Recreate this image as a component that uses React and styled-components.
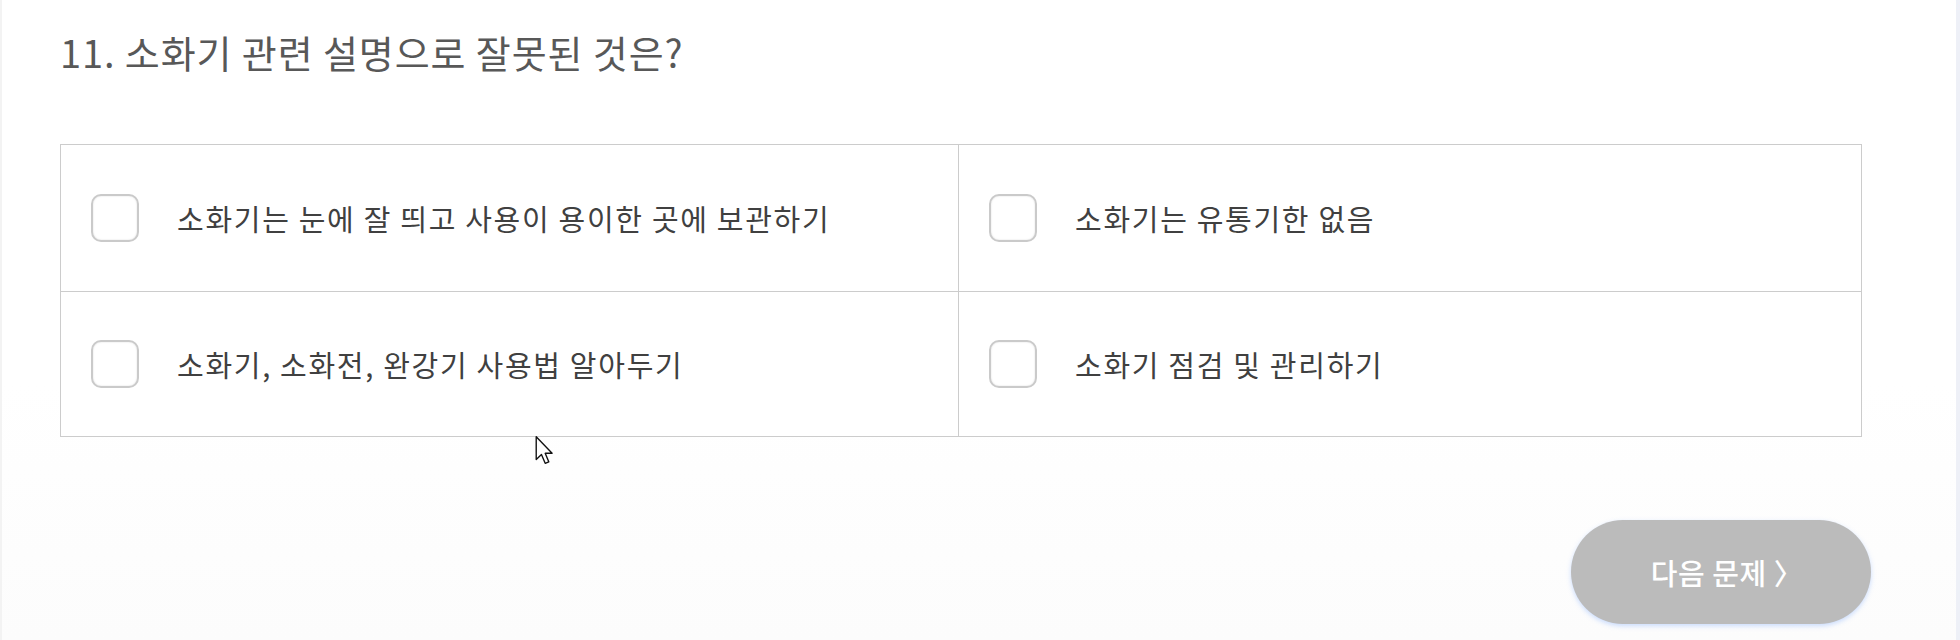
import React from 'react';
import styled, { createGlobalStyle } from 'styled-components';

const GlobalStyle = createGlobalStyle`
    html, body {
        margin: 0;
        padding: 0;
        background: #ffffff;
    }
    body {
        font-family: "Noto Sans CJK KR", "Noto Sans", sans-serif;
    }
`;

const Page = styled.div`
    position: relative;
    box-sizing: border-box;
    width: 1960px;
    height: 640px;
    padding: 27px 94px 0 60px;
    border-left: 2px solid #f3f3f3;
    border-right: 4px solid #eef0f7;
    background: linear-gradient(#ffffff 60%, #fcfcfc);
    overflow: hidden;
`;

const Title = styled.h2`
    margin: 0 0 0 -2px;
    font-size: 38px;
    font-weight: 400;
    line-height: 50px;
    color: #585858;
    letter-spacing: 0.9px;
`;

const Choices = styled.div`
    display: grid;
    grid-template-columns: 897px 1fr;
    grid-template-rows: 146px 144px;
    gap: 1px;
    margin-top: 67px;
    margin-left: -2px;
    border: 1px solid #cccccc;
    background: #cccccc;
`;

const Choice = styled.label`
    display: flex;
    align-items: center;
    gap: 38px;
    padding-left: 30px;
    background: #ffffff;
    cursor: pointer;
`;

const Box = styled.span`
    box-sizing: border-box;
    flex: none;
    width: 48px;
    height: 48px;
    border: 2px solid #cacaca;
    border-radius: 10px;
    box-shadow: inset 0 0 2px rgba(0, 0, 0, 0.14);
    background: #ffffff;
`;

const ChoiceText = styled.span`
    font-size: 29px;
    color: #404040;
    letter-spacing: 1.7px;
`;

const Footer = styled.div`
    display: flex;
    justify-content: flex-end;
    margin-top: 83px;
    margin-right: -9px;
`;

const NextButton = styled.button`
    width: 300px;
    height: 104px;
    border: none;
    border-radius: 52px;
    background: #bbbbbb;
    color: #ffffff;
    font-family: inherit;
    font-size: 29px;
    font-weight: 500;
    letter-spacing: 0.5px;
    box-shadow: 0 2px 5px rgba(110, 160, 255, 0.35);
    padding-left: 18px;
`;

const Cursor = styled.svg`
    position: absolute;
    left: 533px;
    top: 436px;
`;

const choices = [
    '소화기는 눈에 잘 띄고 사용이 용이한 곳에 보관하기',
    '소화기는 유통기한 없음',
    '소화기, 소화전, 완강기 사용법 알아두기',
    '소화기 점검 및 관리하기',
];

const App = () => (
    <>
        <GlobalStyle />
        <Page>
            <Title>11. 소화기 관련 설명으로 잘못된 것은?</Title>
            <Choices>
                {choices.map(text => (
                    <Choice key={text}>
                        <Box />
                        <ChoiceText>{text}</ChoiceText>
                    </Choice>
                ))}
            </Choices>
            <Footer>
                <NextButton>다음 문제 〉</NextButton>
            </Footer>
            <Cursor width="19" height="29" viewBox="0 0 13 21">
                <path d="M0.5 0.5 L0.5 17 L4.3 13.4 L7 19.8 L9.6 18.7 L7 12.5 L12 12.5 Z"
                    fill="#ffffff" stroke="#111111" strokeWidth="1" strokeLinejoin="round" />
            </Cursor>
        </Page>
    </>
);

export default App;
